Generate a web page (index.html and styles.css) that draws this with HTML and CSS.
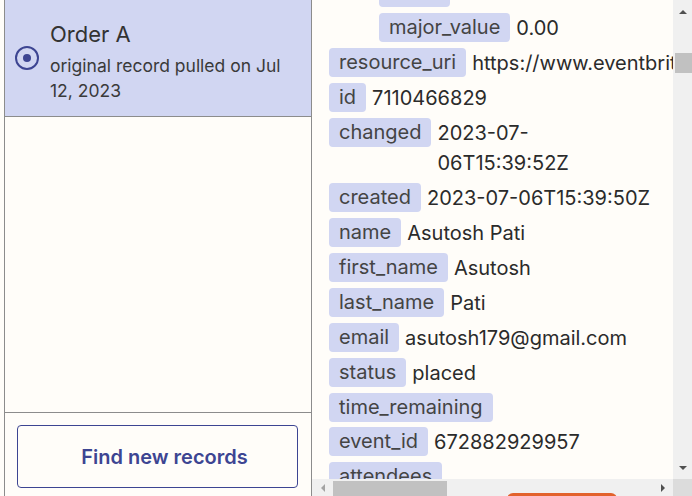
FILE: index.html
```html
<!DOCTYPE html>
<html>
<head>
<meta charset="utf-8">
<title>Order records</title>
<link rel="stylesheet" href="styles.css">
</head>
<body>
	<div id="page">
		<div id="liste_records">
			<div class="record selectionne">
				<span class="radio"><span></span></span>
				<div class="record_texte">
					<h3>Order A</h3>
					<p>original record pulled on Jul 12, 2023</p>
				</div>
			</div>
			<div class="vide"></div>
			<div class="pied">
				<button type="button" id="btnChercher">Find new records</button>
			</div>
		</div>

		<div id="details">
			<div class="zone">
				<div class="contenu">
					<div class="ligne niveau2 premiere"><span class="cle">value</span><span class="valeur">0</span></div>
					<div class="ligne niveau2"><span class="cle">major_value</span><span class="valeur">0.00</span></div>
					<div class="ligne"><span class="cle">resource_uri</span><span class="valeur">https://www.eventbrite.com/api/v3/orders/7110466829/</span></div>
					<div class="ligne"><span class="cle">id</span><span class="valeur">7110466829</span></div>
					<div class="ligne"><span class="cle">changed</span><span class="valeur">2023-07-<wbr>06T15:39:52Z</span></div>
					<div class="ligne"><span class="cle">created</span><span class="valeur">2023-07-06T15:39:50Z</span></div>
					<div class="ligne"><span class="cle">name</span><span class="valeur">Asutosh Pati</span></div>
					<div class="ligne"><span class="cle">first_name</span><span class="valeur">Asutosh</span></div>
					<div class="ligne"><span class="cle">last_name</span><span class="valeur">Pati</span></div>
					<div class="ligne"><span class="cle">email</span><span class="valeur">asutosh179@gmail.com</span></div>
					<div class="ligne"><span class="cle">status</span><span class="valeur">placed</span></div>
					<div class="ligne"><span class="cle">time_remaining</span><span class="valeur"></span></div>
					<div class="ligne"><span class="cle">event_id</span><span class="valeur">672882929957</span></div>
					<div class="ligne"><span class="cle">attendees</span><span class="valeur"></span></div>
				</div>
				<div class="barre_v">
					<span class="fleche"><span class="tri_haut"></span></span>
					<span class="curseur_v"></span>
					<span class="espace"></span>
					<span class="fleche"><span class="tri_bas"></span></span>
				</div>
			</div>
			<div class="barre_h">
				<div class="piste_h">
					<span class="fleche_h"><span class="tri_gauche"></span></span>
					<span class="curseur_h"></span>
					<span class="espace"></span>
					<span class="fleche_h"><span class="tri_droite"></span></span>
				</div>
				<div class="coin"></div>
			</div>
			<span class="bouton_orange"></span>
		</div>
	</div>
</body>
</html>
```

FILE: styles.css
```css
	html, body {
		margin: 0;
		height: 100%;
	}

	body {
		font-family: Inter, "Noto Sans", sans-serif;
		background: #fffdf9;
		color: #2d2e2e;
	}

	#page {
		display: flex;
		height: 496px;
		overflow: hidden;
	}

	/* colonne de gauche */
	#liste_records {
		width: 306px;
		margin-left: 4px;
		border-left: 1px solid #8c8c8c;
		border-right: 1px solid #8c8c8c;
		display: flex;
		flex-direction: column;
		flex-shrink: 0;
	}

	.record {
		display: flex;
		gap: 11px;
		height: 85px;
		padding: 19px 14px 12px 10px;
		border-bottom: 1px solid #8c8c8c;
	}

	.selectionne {
		background: #d1d6f2;
	}

	.radio {
		width: 24px;
		height: 24px;
		box-sizing: border-box;
		margin-top: 27px;
		border: 2px solid #3d4592;
		border-radius: 50%;
		display: flex;
		align-items: center;
		justify-content: center;
		flex-shrink: 0;
	}

	.radio span {
		width: 8px;
		height: 8px;
		border-radius: 50%;
		background: #3d4592;
	}

	.record_texte h3 {
		margin: 0;
		font-size: 22px;
		font-weight: 400;
		line-height: 30px;
		color: #333;
	}

	.record_texte p {
		margin: 4px 0 0 0;
		font-size: 17.5px;
		line-height: 25px;
		color: #3a3a3a;
	}

	.vide {
		flex: 1;
	}

	.pied {
		border-top: 1px solid #8c8c8c;
		padding: 12px 13px 8px 12px;
	}

	#btnChercher {
		width: 100%;
		height: 63px;
		padding: 0 0 0 14px;
		border: 1px solid #3d4592;
		border-radius: 4px;
		background: #fffdf9;
		color: #3d4592;
		font-family: Inter, "Noto Sans", sans-serif;
		font-size: 20px;
		font-weight: 600;
	}

	/* colonne de droite */
	#details {
		flex: 1;
		display: flex;
		flex-direction: column;
		position: relative;
		min-width: 0;
	}

	.zone {
		flex: 1;
		display: flex;
		min-height: 0;
	}

	.contenu {
		flex: 1;
		min-width: 0;
		overflow: hidden;
		padding: 0 17px;
		display: flex;
		flex-direction: column;
		gap: 5px;
	}

	.ligne {
		display: flex;
		align-items: flex-start;
		gap: 6px;
		font-size: 20px;
	}

	.premiere {
		margin-top: -22px;
	}

	.niveau2 {
		padding-left: 50px;
	}

	.cle {
		flex-shrink: 0;
		white-space: nowrap;
		background: #d1d6f2;
		border-radius: 4px;
		padding: 0 10px;
		line-height: 29px;
		color: #444;
	}

	.valeur {
		line-height: 30px;
		color: #2b2b2b;
	}

	/* barres de defilement */
	.barre_v {
		width: 19px;
		background: #f0f0f0;
		display: flex;
		flex-direction: column;
		flex-shrink: 0;
	}

	.fleche {
		height: 23px;
		display: flex;
		align-items: center;
		justify-content: center;
	}

	.tri_haut {
		border-left: 4px solid transparent;
		border-right: 4px solid transparent;
		border-bottom: 4px solid #505050;
	}

	.tri_bas {
		border-left: 4px solid transparent;
		border-right: 4px solid transparent;
		border-top: 4px solid #505050;
	}

	.curseur_v {
		height: 20px;
		margin: 30px 0 0 2px;
		background: #c1c1c1;
	}

	.espace {
		flex: 1;
	}

	.barre_h {
		height: 17px;
		display: flex;
		flex-shrink: 0;
	}

	.piste_h {
		flex: 1;
		display: flex;
		background: #f0f0f0;
	}

	.fleche_h {
		width: 21px;
		display: flex;
		align-items: center;
		justify-content: center;
	}

	.tri_gauche {
		border-top: 4px solid transparent;
		border-bottom: 4px solid transparent;
		border-right: 4px solid #a3a3a3;
	}

	.tri_droite {
		border-top: 4px solid transparent;
		border-bottom: 4px solid transparent;
		border-left: 4px solid #505050;
	}

	.curseur_h {
		width: 114px;
		margin-top: 2px;
		background: #c1c1c1;
	}

	.coin {
		width: 19px;
		background: #dcdcdc;
	}

	.bouton_orange {
		position: absolute;
		left: 195px;
		top: 493px;
		width: 110px;
		height: 20px;
		border-radius: 6px;
		background: #e2622c;
	}
```
